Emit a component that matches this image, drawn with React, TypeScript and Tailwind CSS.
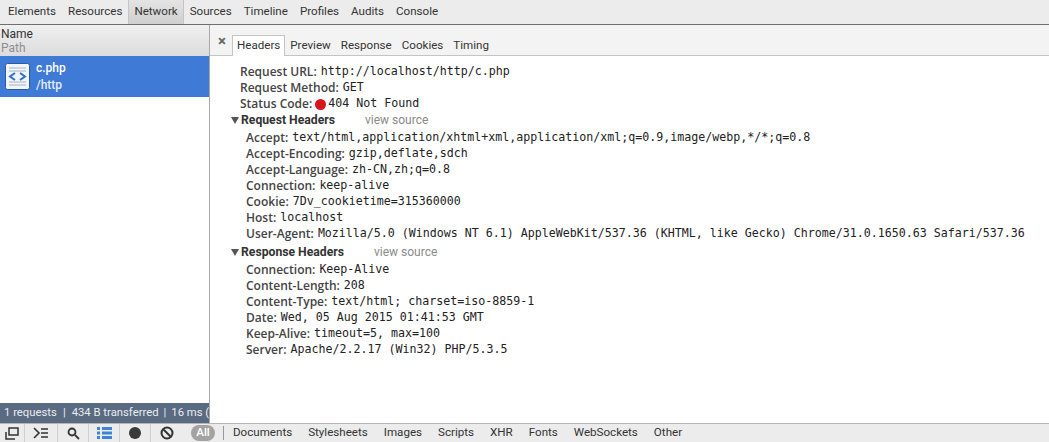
const sans = "font-['Roboto','Liberation_Sans',sans-serif]";
const semi = "font-['Open_Sans','Liberation_Sans',sans-serif] font-semibold";
const mono = "font-['DejaVu_Sans_Mono',monospace] text-[11.63px] text-[#222]";

const panels = ["Elements", "Resources", "Network", "Sources", "Timeline", "Profiles", "Audits", "Console"];
const tabs = ["Headers", "Preview", "Response", "Cookies", "Timing"];
const filters = ["Documents", "Stylesheets", "Images", "Scripts", "XHR", "Fonts", "WebSockets", "Other"];

type Row = [string, string];

const general: Row[] = [
  ["Request URL:", "http://localhost/http/c.php"],
  ["Request Method:", "GET"],
];
const requestHeaders: Row[] = [
  ["Accept:", "text/html,application/xhtml+xml,application/xml;q=0.9,image/webp,*/*;q=0.8"],
  ["Accept-Encoding:", "gzip,deflate,sdch"],
  ["Accept-Language:", "zh-CN,zh;q=0.8"],
  ["Connection:", "keep-alive"],
  ["Cookie:", "7Dv_cookietime=315360000"],
  ["Host:", "localhost"],
  ["User-Agent:", "Mozilla/5.0 (Windows NT 6.1) AppleWebKit/537.36 (KHTML, like Gecko) Chrome/31.0.1650.63 Safari/537.36"],
];
const responseHeaders: Row[] = [
  ["Connection:", "Keep-Alive"],
  ["Content-Length:", "208"],
  ["Content-Type:", "text/html; charset=iso-8859-1"],
  ["Date:", "Wed, 05 Aug 2015 01:41:53 GMT"],
  ["Keep-Alive:", "timeout=5, max=100"],
  ["Server:", "Apache/2.2.17 (Win32) PHP/5.3.5"],
];

const HeaderRow = ({ name, value, indent }: { name: string; value: string; indent: string }) => (
  <div className={`flex h-4 items-center whitespace-nowrap ${indent}`}>
    <span className={`mr-[4px] text-[12px] text-[#444] ${semi}`}>{name}</span>
    <span className={mono}>{value}</span>
  </div>
);

const SectionTitle = ({ title, className, gap }: { title: string; className: string; gap: string }) => (
  <div className={`flex h-4 items-center whitespace-nowrap pl-[21px] ${className}`}>
    <span className="mr-[2px] h-0 w-0 border-x-[4px] border-t-[7px] border-x-transparent border-t-[#555]" />
    <span className="text-[12.2px] font-bold text-[#333]">{title}</span>
    <span className={`text-[12px] text-[#8a8a8a] ${gap}`}>view source</span>
  </div>
);

const ToolButton = ({ children, width }: { children: React.ReactNode; width: string }) => (
  <div className={`flex h-full items-center justify-center border-r border-[#d0d0d0] ${width}`}>{children}</div>
);

export default function App() {
  return (
    <div className={`flex h-[442px] w-[1049px] flex-col overflow-hidden bg-white text-[11.6px] text-[#333] ${sans}`}>
      {/* Panel tabs */}
      <div className="flex h-[25px] shrink-0 items-stretch border-b border-[#6f6f6f] bg-[#ececec] pl-[2px]">
        {panels.map((p) => (
          <div
            key={p}
            className={`flex items-center ${
              p === "Network"
                ? "border-x border-[#c4c4c4] bg-gradient-to-b from-[#e4e4e4] to-[#cfcfcf] px-[5px]"
                : "px-[6px]"
            }`}
          >
            {p}
          </div>
        ))}
      </div>

      <div className="flex min-h-0 flex-1">
        {/* Request list */}
        <div className="flex w-[210px] shrink-0 flex-col border-r border-[#a9a9a9]">
          <div className="flex h-[31px] shrink-0 flex-col justify-center bg-gradient-to-b from-[#f0f0f0] to-[#dcdcdc] pl-[1px] text-[12px] leading-[14px]">
            <span className="text-[#333]">Name</span>
            <span className="text-[#8e8e8e]">Path</span>
          </div>
          <div className="flex h-[41px] shrink-0 items-center bg-[#3e7ad6] pl-[5px] text-white">
            <svg width="25" height="27" viewBox="0 0 25 27">
              <rect x="0.5" y="0.5" width="24" height="26" rx="2" fill="#f1f4f8" stroke="#2c5a9e" />
              <path d="M4 5h17M4 8h17M4 19h17M4 22h17" stroke="#a9b4c2" />
              <path d="M10 10l-5 3.500 5 3.500M15 10l5 3.500-5 3.500" fill="none" stroke="#2e6fd0" strokeWidth="2" />
            </svg>
            <div className="ml-[6px] flex flex-col text-[12px] font-medium leading-[17px]">
              <span>c.php</span>
              <span className="text-[#e4edfb]">/http</span>
            </div>
          </div>
          <div className="flex-1" />
          <div className="flex h-[20px] shrink-0 items-center overflow-hidden whitespace-nowrap bg-[#5a6a80] pl-[4px] text-[11.3px] text-[#e8edf3]">
            <span>1 requests</span>
            <span className="mx-[6px]">|</span>
            <span>434 B transferred</span>
            <span className="mx-[5px]">|</span>
            <span>16 ms (</span>
          </div>
        </div>

        {/* Request details */}
        <div className="flex min-w-0 flex-1 flex-col">
          <div className="flex h-[31px] shrink-0 items-end border-b border-[#c4c4c4] bg-[#f3f3f3]">
            <span className="mb-[7px] ml-[8px] mr-[6px] text-[15px] font-bold leading-[14px] text-[#666]">×</span>
            <div className="flex">
              {tabs.map((t) => (
                <div
                  key={t}
                  className={`-mb-[1px] flex h-[21px] items-center ${
                    t === "Headers" ? "border border-b-0 border-[#c4c4c4] bg-white px-[4px]" : "px-[5px]"
                  }`}
                >
                  {t}
                </div>
              ))}
            </div>
          </div>
          <div className="flex-1 overflow-hidden pt-[8px]">
            {general.map(([n, v]) => (
              <HeaderRow key={n} name={n} value={v} indent="pl-[30px]" />
            ))}
            <div className="flex h-4 items-center whitespace-nowrap pl-[30px]">
              <span className={`mr-[3px] text-[12px] text-[#444] ${semi}`}>Status Code:</span>
              <span className="mr-[2px] h-[11px] w-[11px] rounded-full bg-[#d8141c]" />
              <span className={mono}>404 Not Found</span>
            </div>
            <SectionTitle title="Request Headers" className="mb-[2px]" gap="ml-[30px]" />
            {requestHeaders.map(([n, v]) => (
              <HeaderRow key={n} name={n} value={v} indent="pl-[36px]" />
            ))}
            <SectionTitle title="Response Headers" className="my-[2px]" gap="ml-[30px]" />
            {responseHeaders.map(([n, v]) => (
              <HeaderRow key={n} name={n} value={v} indent="pl-[36px]" />
            ))}
          </div>
        </div>
      </div>

      {/* Bottom toolbar */}
      <div className="flex h-[19px] shrink-0 items-center border-t border-[#b5b5b5] bg-[#ececec]">
        <ToolButton width="w-[25px]">
          <svg width="14" height="13" viewBox="0 0 14 13" fill="none" stroke="#333" strokeWidth="1.500">
            <rect x="4" y="1" width="9" height="7" />
            <path d="M1 5v7h9" />
          </svg>
        </ToolButton>
        <ToolButton width="w-[33px]">
          <svg width="16" height="12" viewBox="0 0 16 12" fill="none" stroke="#333" strokeWidth="1.600">
            <path d="M1 1l5 5-5 5M8 2h7M8 6h7M8 10h7" />
          </svg>
        </ToolButton>
        <ToolButton width="w-[31px]">
          <svg width="13" height="13" viewBox="0 0 13 13" fill="none" stroke="#333" strokeWidth="1.800">
            <circle cx="5" cy="5" r="3.500" />
            <path d="M8 8l4 4" />
          </svg>
        </ToolButton>
        <ToolButton width="w-[31px]">
          <svg width="15" height="12" viewBox="0 0 15 12" fill="#3d83d8">
            <path d="M0 0h3v3H0zM5 0h10v3H5zM0 4.500h3v3H0zM5 4.500h10v3H5zM0 9h3v3H0zM5 9h10v3H5z" />
          </svg>
        </ToolButton>
        <ToolButton width="w-[31px]">
          <span className="h-[12px] w-[12px] rounded-full bg-[#3a3a3a]" />
        </ToolButton>
        <div className="flex h-full w-[32px] items-center justify-center">
          <svg width="14" height="14" viewBox="0 0 14 14" fill="none" stroke="#333" strokeWidth="2">
            <circle cx="7" cy="7" r="5.500" />
            <path d="M3 3l8 8" />
          </svg>
        </div>
        <span className="ml-[8px] flex h-[16px] w-[24px] items-center justify-center rounded-full bg-[#a3a3a3] font-medium text-white">
          All
        </span>
        <span className="ml-[8px] h-[14px] w-px bg-[#999]" />
        <div className="ml-[1px] flex items-center">
          {filters.map((f) => (
            <span key={f} className="px-[8px] text-[11.6px]">
              {f}
            </span>
          ))}
        </div>
      </div>
    </div>
  );
}
